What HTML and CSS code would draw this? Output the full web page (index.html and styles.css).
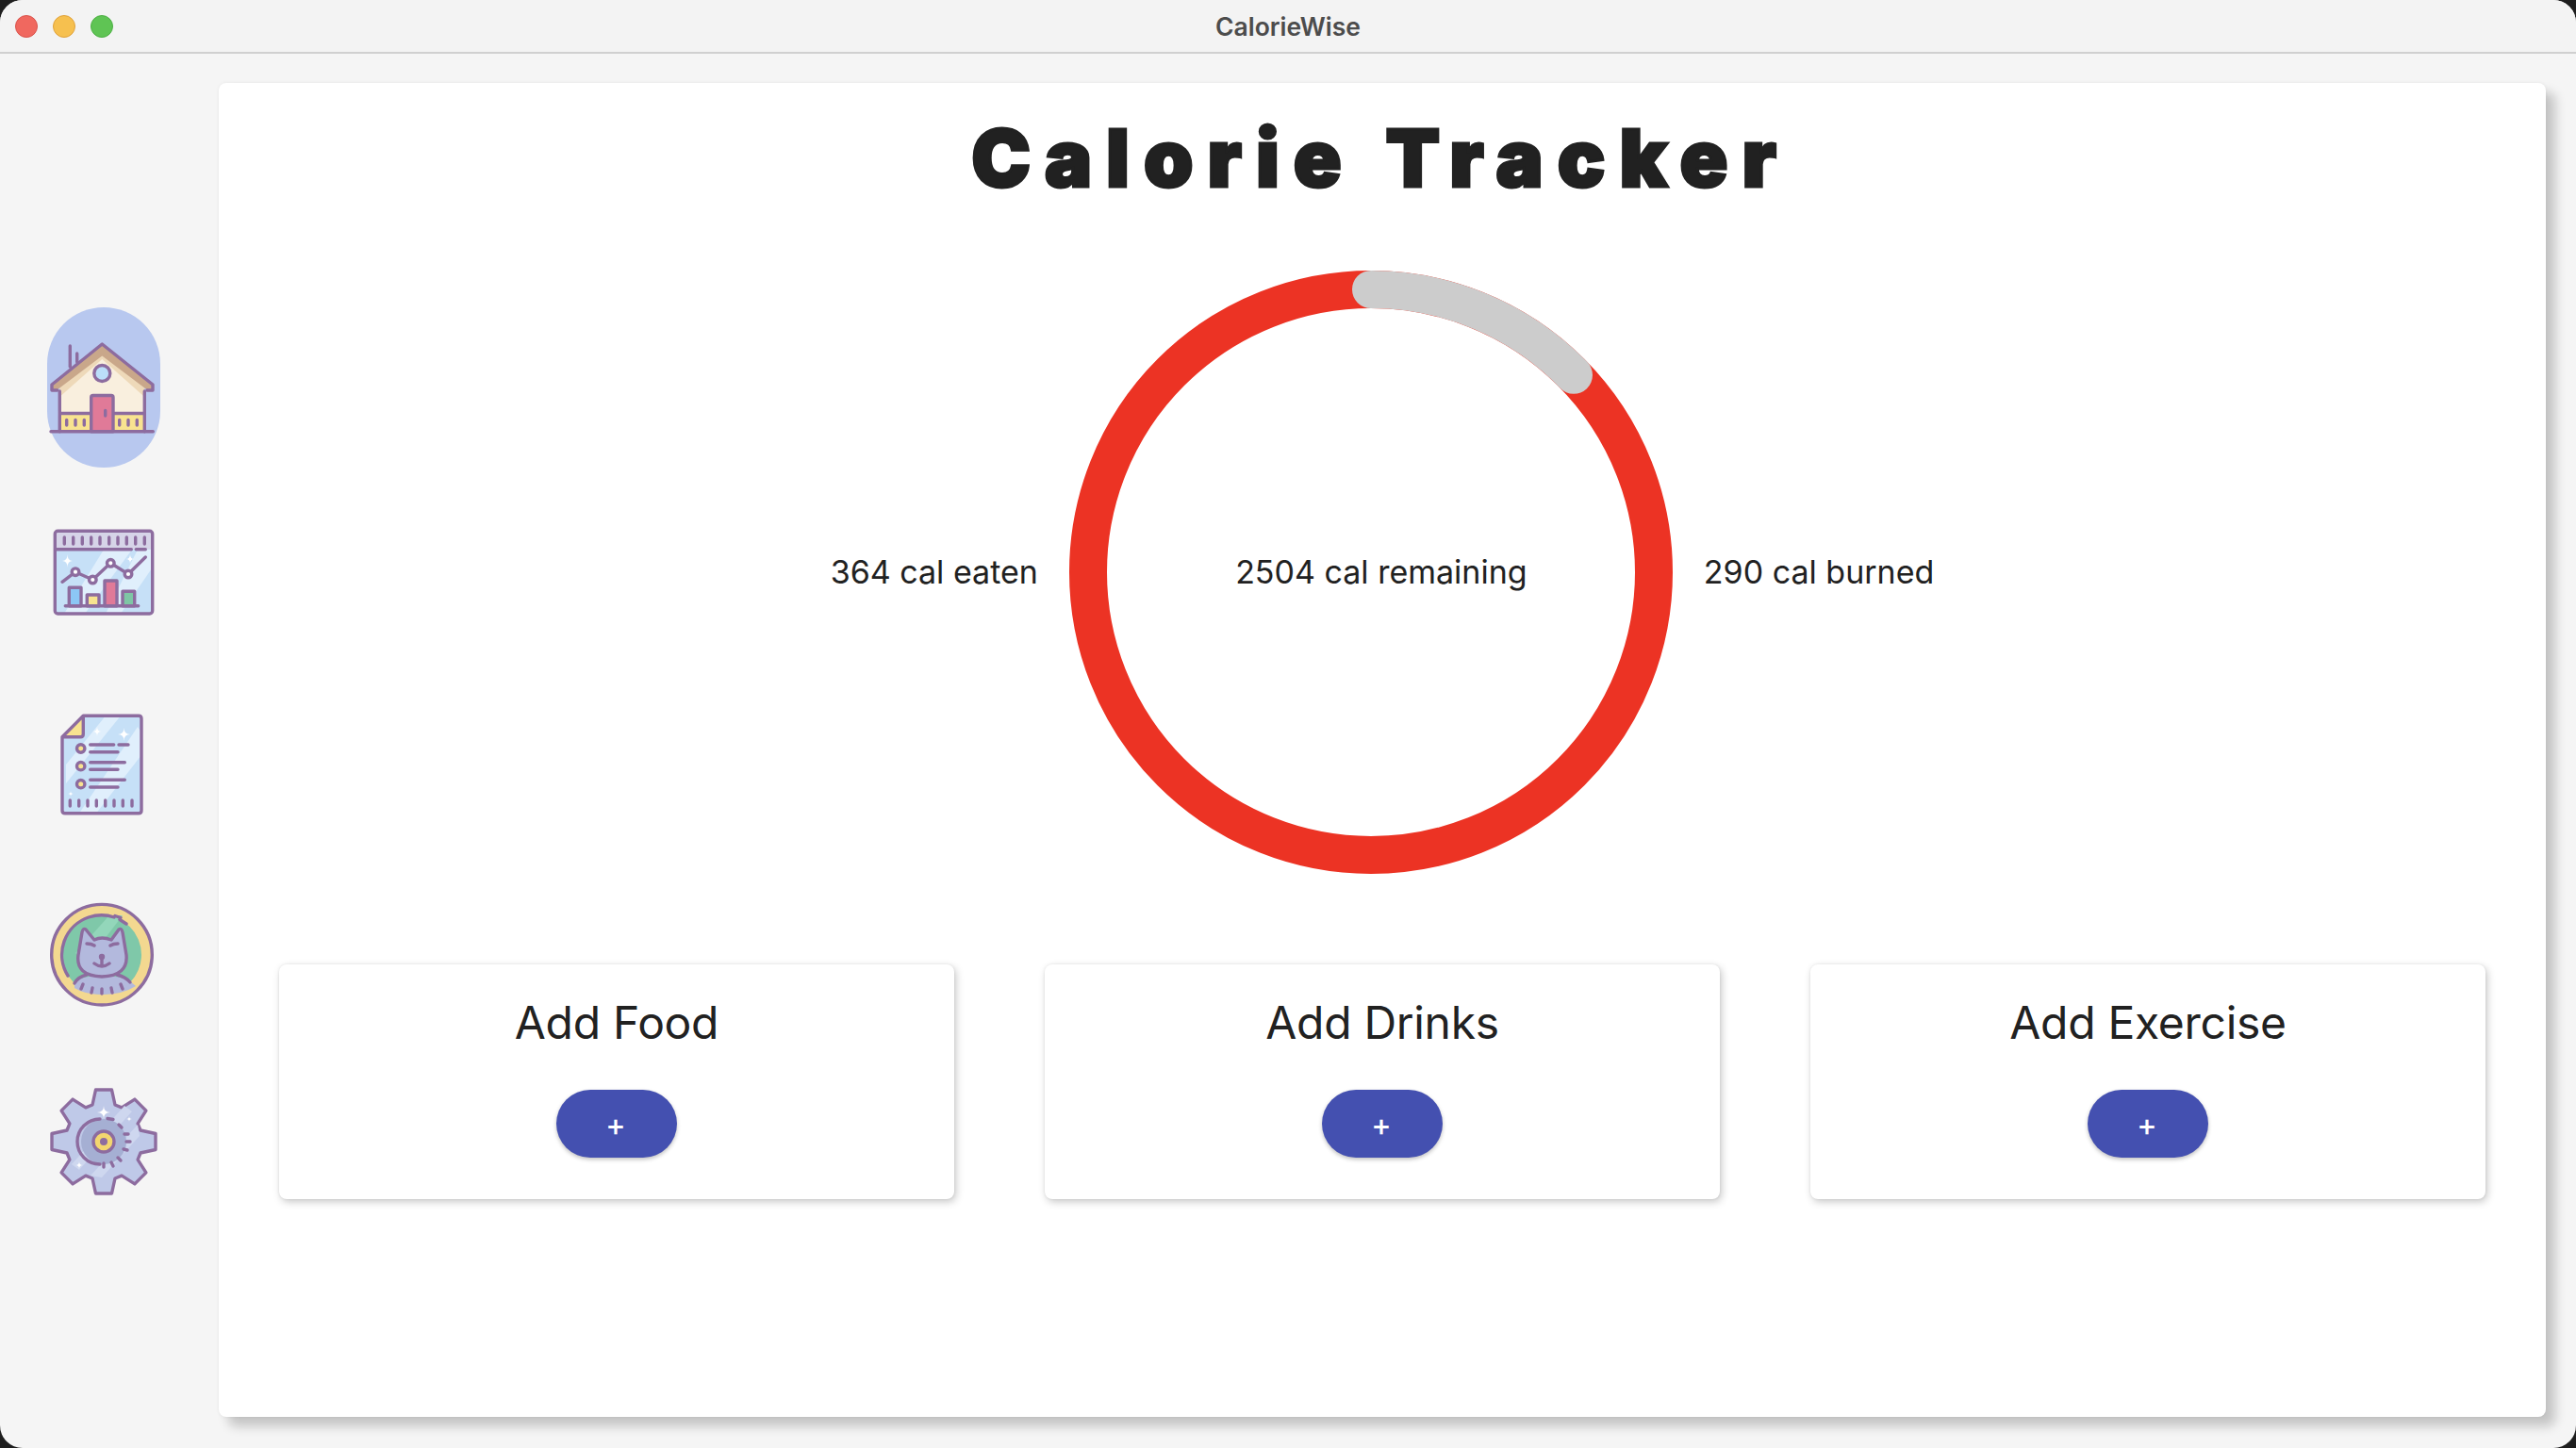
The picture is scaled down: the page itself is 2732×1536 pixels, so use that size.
FILE: index.html
```html
<!DOCTYPE html>
<html lang="en">
<head>
<meta charset="utf-8">
<title>CalorieWise</title>
<link rel="stylesheet" href="styles.css">
</head>
<body>
<div class="window">
  <header class="titlebar">
    <div class="lights">
      <span class="light red"></span>
      <span class="light yellow"></span>
      <span class="light green"></span>
    </div>
    <span class="window-title">CalorieWise</span>
  </header>
  <div class="content">
    <nav class="rail">
      <div class="rail-item">
        <div class="pill active">
          <svg class="icon" viewBox="0 0 120 120">
            <path class="ln" d="M24.3 38V16M31.700 33V24"/>
            <path class="f-cream" d="M13.300 62L58.300 20L103.300 62V106H13.300Z"/>
            <path class="f-shade" d="M13.300 70L58.300 30L103.300 70V60L58.300 22L13.300 60Z"/>
            <path class="f-yellow" d="M13.300 87.500H103.300V106.700H13.300Z"/>
            <path class="ln" d="M13.300 64V106.700M103.300 64V106.700M13.300 87.500H46.700M70 87.500H103.300"/>
            <path class="f-roof" d="M58.300 14L112 57V62.500H106L58.300 26.500L10.600 62.500H5V57Z"/>
            <path class="ln" d="M10.600 63H5V57L58.300 14L112 57V63H106"/>
            <circle class="f-sky ln" cx="58.300" cy="45" r="8.500"/>
            <path class="f-pink ln" d="M46.700 106.700V70.500Q46.700 68.500 48.700 68.500H68Q70 68.500 70 70.500V106.700Z"/>
            <path class="ln" d="M61.700 84.500V90M20.700 94.500V100M30 94.500V100M39.300 94.500V100M76.700 94.500V100M86 94.500V100M95.300 94.500V100M4 106.700H112.300"/>
          </svg>
        </div>
      </div>
      <div class="rail-item">
        <svg class="icon" viewBox="0 0 120 120">
          <rect class="f-sky2" x="8.300" y="12.300" width="103.400" height="87.700" rx="3"/>
          <path class="f-streak" d="M60 32H90L40 100H18ZM96 32H111V52L78 100H62Z"/>
          <rect class="f-lav" x="8.300" y="12.300" width="103.400" height="19.400"/>
          <rect class="ln" x="8.300" y="12.300" width="103.400" height="87.700" rx="3"/>
          <path class="ln" d="M9 31.700H89.300M94.300 31.700H104.300M18.300 19V26M27.700 19V26M37.300 19V26M46.700 19V26M56 19V26M65.700 19V26M75 19V26M84.300 19V26M93.700 19V26M103.300 19V26"/>
          <path class="f-white" d="M21.500 37Q21.500 44 27 44Q21.500 44 21.500 51Q21.500 44 16 44Q21.500 44 21.500 37ZM88 37Q88 42 92.500 42Q88 42 88 47Q88 42 83.500 42Q88 42 88 37Z"/>
          <path class="ln" d="M16 66.300L30 55.700L48.300 64L67.300 46.300L86 58L104.300 40"/>
          <circle class="f-white ln" cx="30" cy="55.700" r="3.800"/>
          <circle class="f-white ln" cx="48.300" cy="64" r="3.800"/>
          <circle class="f-white ln" cx="67.300" cy="46.300" r="3.800"/>
          <circle class="f-white ln" cx="86" cy="58" r="3.800"/>
          <rect class="f-blue ln" x="23.300" y="72.300" width="12.700" height="19.400"/>
          <rect class="f-yellow ln" x="42.300" y="80" width="12.700" height="11.700"/>
          <rect class="f-pink ln" x="61" y="65" width="13" height="26.700"/>
          <rect class="f-green ln" x="80" y="76.300" width="12.700" height="15.400"/>
          <path class="ln" d="M19.300 91.700H96.700"/>
        </svg>
      </div>
      <div class="rail-item">
        <svg class="icon" viewBox="0 0 120 120">
          <path class="f-sky2" d="M38.300 8.300H97Q100 8.300 100 11.300V108.700Q100 111.700 97 111.700H19Q16 111.700 16 108.700V30.700Z"/>
          <path class="f-streak" d="M62 8.300H78L20 80V60ZM96 20L100 26V50L52 111.700H34Z"/>
          <path class="f-yellow" d="M38.300 9V30.700H16Z"/>
          <path class="ln" d="M38.300 8.300H97Q100 8.300 100 11.300V108.700Q100 111.700 97 111.700H19Q16 111.700 16 108.700V30.700ZM38.300 8.300V27.700Q38.300 30.700 35.300 30.700H16"/>
          <path class="f-white" d="M53 20Q53 25 58 25Q53 25 53 30Q53 25 48 25Q53 25 53 20ZM81.500 21Q81.500 28 88 28Q81.500 28 81.500 35Q81.500 28 75 28Q81.500 28 81.500 21ZM25 88Q25 91 28 91Q25 91 25 94Q25 91 22 91Q25 91 25 88Z"/>
          <circle class="f-yellow ln" cx="35.700" cy="43" r="4.200"/>
          <circle class="f-yellow ln" cx="35.700" cy="61.700" r="4.200"/>
          <circle class="f-yellow ln" cx="35.700" cy="80.700" r="4.200"/>
          <path class="ln" d="M45.700 39H70.700M76 39H86M45.700 46.700H75M45.700 57.700H82.300M45.700 65.300H75M45.700 76.300H82.300M45.700 84H75M24.300 98V104M33.700 98V104M43 98V104M52.300 98V104M61.700 98V104M71 98V104M80.300 98V104M90 98V104"/>
        </svg>
      </div>
      <div class="rail-item">
        <svg class="icon" viewBox="0 0 120 120">
          <circle class="f-gold ln" cx="58" cy="61.700" r="53.300"/>
          <circle class="f-teal" cx="58" cy="61.700" r="42"/>
          <path class="f-streak2" d="M66 20H80L42 70L30 60Z"/>
          <path class="ln" d="M71 22Q58 17.500 44 22A42 42 0 0 0 22 84M77 24.500L84 29M72 20.500L78 22.500"/>
          <path class="f-cat" d="M29 91Q37 84 58 84Q79 84 88 90L94 95Q80 104 58 104Q40 104 29 97Z"/>
          <path class="ln" d="M29 92Q33 85 42 83M74 83Q83 85 88 91"/>
          <path class="f-cat ln" d="M41 35Q38 33 37 38L33 62Q30 84 58 85Q86 84 84 62L80 38Q79 33 76 35L68 46Q58 42 50 46Z"/>
          <path class="ln" d="M42 50Q47 50 50 52M75 50Q70 50 67 52M58 67V72M50 71Q58 77 66 71M38 93L36 98M48 97L47 102M58 98V103M68 97L69 102M78 93L80 98"/>
          <circle class="f-purple" cx="58" cy="64" r="3.200"/>
        </svg>
      </div>
      <div class="rail-item">
        <svg class="icon" viewBox="0 0 120 120">
          <g transform="translate(60 60)">
            <polygon class="f-gear ln" points="-12,-39 -8.500,-55 8.500,-55 12,-39 19.100,-36.100 32.900,-44.900 44.900,-32.900 36.100,-19.100 39,-12 55,-8.500 55,8.500 39,12 36.100,19.100 44.900,32.900 32.900,44.900 19.100,36.100 12,39 8.500,55 -8.500,55 -12,39 -19.100,36.100 -32.900,44.900 -44.900,32.900 -36.100,19.100 -39,12 -55,8.500 -55,-8.500 -39,-12 -36.100,-19.100 -44.900,-32.900 -32.900,-44.900 -19.100,-36.100"/>
            <path class="f-streak3" d="M22 -38L30 -32L-26 30L-34 24ZM36 -18L38 -6L-2 38L-14 36Z"/>
            <circle class="f-hub" cx="0" cy="0" r="24"/>
            <path class="ln" d="M-4 24A24 24 0 0 1 -4 -24M4 -24.500L10 -23.500M16 -18L19 -15M22 -8L26 -8M24 0H28M21 8L25 9M15 17L18 20M8 22L10 26M0 23V27"/>
            <circle class="f-amber ln" cx="0" cy="0" r="11"/>
            <circle class="f-purple" cx="0" cy="0" r="4"/>
            <path class="f-white" d="M0 -38Q0 -31 7 -31Q0 -31 0 -24Q0 -31 -7 -31Q0 -31 0 -38ZM27 -27Q27 -24 30 -24Q27 -24 27 -21Q27 -24 24 -24Q27 -24 27 -27ZM-26 21Q-26 25 -22 25Q-26 25 -26 29Q-26 25 -30 25Q-26 25 -26 21Z"/>
          </g>
        </svg>
      </div>
    </nav>
    <main class="panel">
      <h1 class="heading">Calorie Tracker</h1>
      <section class="summary">
        <span class="stat">364 cal eaten</span>
        <div class="ring">
          <svg class="ring-svg" viewBox="0 0 640 640">
            <circle class="ring-base" cx="320" cy="320" r="300"/>
            <path class="ring-arc" d="M320 20A300 300 0 0 1 535 110.800"/>
          </svg>
          <span class="stat ring-label">2504 cal remaining</span>
        </div>
        <span class="stat">290 cal burned</span>
      </section>
      <section class="cards">
        <article class="card">
          <h2 class="card-title">Add Food</h2>
          <button class="add" type="button">+</button>
        </article>
        <article class="card">
          <h2 class="card-title">Add Drinks</h2>
          <button class="add" type="button">+</button>
        </article>
        <article class="card">
          <h2 class="card-title">Add Exercise</h2>
          <button class="add" type="button">+</button>
        </article>
      </section>
    </main>
  </div>
</div>
</body>
</html>
```

FILE: styles.css
```css
* { box-sizing: border-box; }
html, body { margin: 0; height: 100%; background: #1e1e1e; }
body { font-family: Inter, "Liberation Sans", sans-serif; color: #212121; overflow: hidden; }

.window {
  height: 1536px;
  display: flex;
  flex-direction: column;
  background: #f5f5f5;
  border-radius: 24px;
  overflow: hidden;
}
.titlebar {
  height: 57px;
  flex: none;
  display: flex;
  align-items: center;
  justify-content: center;
  position: relative;
  background: #f3f3f3;
  border-bottom: 2px solid #d0d0d0;
}
.lights {
  position: absolute;
  left: 16px;
  top: 16px;
  display: flex;
  gap: 16px;
}
.light { width: 24px; height: 24px; border-radius: 50%; border: 1px solid; }
.red { background: #f0685f; border-color: #d9534c; }
.yellow { background: #f6c04f; border-color: #dfa13a; }
.green { background: #5fc454; border-color: #4caf43; }
.window-title {
  font-family: Inter, sans-serif;
  font-weight: 600;
  font-size: 26.500px;
  color: #4c4c4c;
}

.content { flex: 1; display: flex; min-height: 0; }
.rail {
  width: 232px;
  flex: none;
  padding: 254px 12px 0 0;
  display: flex;
  flex-direction: column;
  align-items: center;
}
.rail-item {
  height: 200px;
  display: flex;
  align-items: center;
  justify-content: center;
  flex: none;
}
.pill {
  width: 120px;
  height: 170px;
  border-radius: 60px;
  display: flex;
  align-items: center;
  justify-content: center;
}
.active { background: #b8c8ef; }
.icon { width: 120px; height: 120px; display: block; }

.ln { stroke: #8d6c9f; stroke-width: 3.4; stroke-linecap: round; stroke-linejoin: round; }
path.ln:not([class*="f-"]), rect.ln:not([class*="f-"]) { fill: none; }
.f-cream { fill: #f9efde; }
.f-shade { fill: #eed9b9; }
.f-yellow { fill: #f8e390; }
.f-roof { fill: #c9a78a; }
.f-sky { fill: #bbdef9; }
.f-pink { fill: #e07a98; }
.f-sky2 { fill: #c6e0f7; }
.f-streak { fill: #e0effc; }
.f-lav { fill: #d6d4e8; }
.f-white { fill: #ffffff; }
.f-blue { fill: #8cc7f5; }
.f-green { fill: #7ec6a5; }
.f-gold { fill: #f3d890; }
.f-teal { fill: #7fc8a9; }
.f-streak2 { fill: #93d6ba; }
.f-cat { fill: #b3b9dd; }
.f-purple { fill: #8d6c9f; }
.f-gear { fill: #bfc9e8; }
.f-streak3 { fill: #ced7ef; }
.f-hub { fill: #a5afd3; }
.f-amber { fill: #f3d66f; }

.panel {
  flex: 1;
  margin: 31px 32px 33px 0;
  padding: 0 64px;
  background: #ffffff;
  border-radius: 8px;
  box-shadow: 10px 10px 12px rgba(0, 0, 0, 0.2), 0 0 4px rgba(0, 0, 0, 0.06);
}
.heading {
  margin: 0;
  height: 160px;
  padding-right: 3px;
  line-height: 160px;
  text-align: center;
  font-family: Inter, Roboto, sans-serif;
  font-weight: 900;
  font-size: 84px;
  letter-spacing: 15px;
  color: #212121;
  -webkit-text-stroke: 3px #212121;
}
.summary {
  margin-top: 39px;
  display: flex;
  justify-content: center;
  align-items: center;
  gap: 33px;
}
.stat { font-size: 34px; line-height: 48px; color: #212121; white-space: nowrap; }
.ring {
  width: 640px;
  height: 640px;
  flex: none;
  position: relative;
}
.ring-svg { width: 640px; height: 640px; display: block; }
.ring-base { fill: none; stroke: #ec3324; stroke-width: 40; }
.ring-arc { fill: none; stroke: #cccccc; stroke-width: 40; stroke-linecap: round; }
.ring-label {
  position: absolute;
  inset: 0;
  display: flex;
  align-items: center;
  justify-content: center;
  padding-left: 22px;
}
.cards {
  margin-top: 96px;
  display: flex;
  gap: 96px;
}
.card {
  flex: 1;
  height: 249px;
  padding-top: 34px;
  display: flex;
  flex-direction: column;
  align-items: center;
  background: #ffffff;
  border-radius: 8px;
  box-shadow: 2px 3px 8px rgba(0, 0, 0, 0.22), 0 0 3px rgba(0, 0, 0, 0.08);
}
.card-title {
  margin: 0 0 43px;
  font-size: 48px;
  line-height: 56px;
  font-weight: 400;
  letter-spacing: -0.300px;
  color: #212121;
}
.add {
  width: 128px;
  height: 72px;
  padding: 2px 2px 0 0;
  border: 0;
  border-radius: 36px;
  background: #4450b0;
  color: #ffffff;
  font-family: Inter, sans-serif;
  font-size: 32px;
  font-weight: 500;
  box-shadow: 0 2px 4px rgba(0, 0, 0, 0.25);
}
```
